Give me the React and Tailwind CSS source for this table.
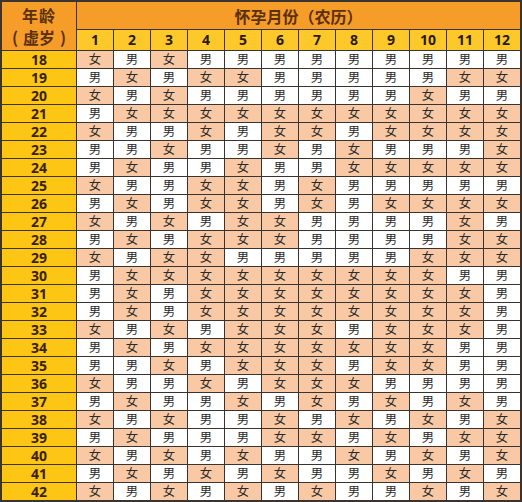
import React from "react";

const data = {
  18: "女男女男男男男男男男男男",
  19: "男女男女女男男男男男女女",
  20: "女男女男男男男男男女男男",
  21: "男女女女女女女女女女女女",
  22: "女男男女男女女男女女女女",
  23: "男男女男男女男女男男男女",
  24: "男女男男女男男女女女女女",
  25: "女男男女女男女男男男男男",
  26: "男女男女女男女男女女女女",
  27: "女男女男女女男男男男女男",
  28: "男女男女女女男男男男女女",
  29: "女男女女男男男男男女女女",
  30: "男女女女女女女女女女男男",
  31: "男女男女女女女女女女女男",
  32: "男女男女女女女女女女女男",
  33: "女男女男女女女男女女女男",
  34: "男女男女女女女女女女男男",
  35: "男男女男女女女男女女男男",
  36: "女男男女男女女女男男男男",
  37: "男女男男女男女男女男女男",
  38: "女男女男男女男女男女男女",
  39: "男女男男男女女男女男女女",
  40: "女男女男女男男女男女男女",
  41: "男女男女男女男男女男女男",
  42: "女男女男女男女男男女男女",
};

const ages = Object.keys(data);
const months = [1, 2, 3, 4, 5, 6, 7, 8, 9, 10, 11, 12];

export default function App() {
  return (
    <div
      className="w-[522px] h-[502px] bg-white"
      style={{ fontFamily: '"Noto Sans CJK SC", "Noto Sans", sans-serif' }}
    >
      <div className="grid grid-cols-[74px_repeat(12,36px)] grid-rows-[27px_20px_repeat(25,17px)] gap-px bg-[#3a3330] p-[2px] w-[522px] h-[502px]">
        <div className="row-span-2 bg-[#f69c28] flex flex-col items-center justify-center text-[16px] font-bold text-[#5a3010] leading-[22px]">
          <span className="tracking-[1px]">年龄</span>
          <span className="flex items-center gap-[5px]">
            <span>(</span>
            <span>虚岁</span>
            <span>)</span>
          </span>
        </div>
        <div className="col-span-12 bg-[#f69c28] flex items-center justify-center text-[16px] font-bold text-[#5a3010]">
          怀孕月份（农历）
        </div>
        {months.map((m) => (
          <div
            key={m}
            className="bg-[#fdc82a] flex items-center justify-center text-[14px] font-bold text-[#2a1a08] leading-none"
            style={{ fontFamily: '"Open Sans", sans-serif' }}
          >
            {m}
          </div>
        ))}
        {ages.map((age) => (
          <React.Fragment key={age}>
            <div
              className="bg-[#fdc614] flex items-center justify-center text-[14px] font-bold text-[#3a2208] leading-none"
              style={{ fontFamily: '"Open Sans", sans-serif' }}
            >
              {age}
            </div>
            {data[age].split("").map((g, i) => (
              <div
                key={i}
                className={
                  "flex items-center justify-center text-[12.4px] text-[#2a2a2a] leading-none " +
                  (g === "女" ? "bg-[#f8c9a4]" : "bg-white")
                }
              >
                {g}
              </div>
            ))}
          </React.Fragment>
        ))}
      </div>
    </div>
  );
}
